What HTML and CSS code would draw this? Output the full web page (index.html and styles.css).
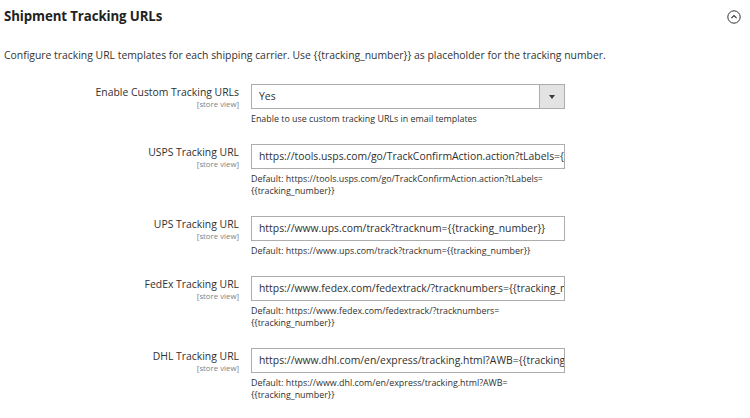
FILE: index.html
```html
<!DOCTYPE html>
<html lang="en">
<head>
<meta charset="utf-8">
<title>Shipment Tracking URLs</title>
<link rel="stylesheet" href="styles.css">
</head>
<body>
<section class="section">
  <header class="section-head">
    <h2 class="section-title">Shipment Tracking URLs</h2>
    <svg class="collapse-icon" width="14" height="14" viewBox="0 0 14 14" aria-hidden="true">
      <circle cx="7" cy="7" r="6.2" fill="none" stroke="#333" stroke-width="1"/>
      <path d="M4.4 8.2 L7 5.6 L9.6 8.2" fill="none" stroke="#333" stroke-width="1.1"/>
    </svg>
  </header>
  <p class="section-desc">Configure tracking URL templates for each shipping carrier. Use {{tracking_number}} as placeholder for the tracking number.</p>

  <div class="fields">
    <div class="field">
      <div class="label"><span class="label-text">Enable Custom Tracking URLs</span><span class="scope">[store view]</span></div>
      <div class="control">
        <div class="select">
          <span class="select-value">Yes</span>
          <span class="select-btn"><span class="arrow"></span></span>
        </div>
        <p class="note">Enable to use custom tracking URLs in email templates</p>
      </div>
    </div>

    <div class="field">
      <div class="label"><span class="label-text">USPS Tracking URL</span><span class="scope">[store view]</span></div>
      <div class="control">
        <div class="input">https://tools.usps.com/go/TrackConfirmAction.action?tLabels={{tracking_number}}</div>
        <p class="note">Default: https://tools.usps.com/go/TrackConfirmAction.action?tLabels=<br>{{tracking_number}}</p>
      </div>
    </div>

    <div class="field">
      <div class="label"><span class="label-text">UPS Tracking URL</span><span class="scope">[store view]</span></div>
      <div class="control">
        <div class="input">https://www.ups.com/track?tracknum={{tracking_number}}</div>
        <p class="note">Default: https://www.ups.com/track?tracknum={{tracking_number}}</p>
      </div>
    </div>

    <div class="field">
      <div class="label"><span class="label-text">FedEx Tracking URL</span><span class="scope">[store view]</span></div>
      <div class="control">
        <div class="input">https://www.fedex.com/fedextrack/?tracknumbers={{tracking_number}}</div>
        <p class="note">Default: https://www.fedex.com/fedextrack/?tracknumbers=<br>{{tracking_number}}</p>
      </div>
    </div>

    <div class="field">
      <div class="label"><span class="label-text">DHL Tracking URL</span><span class="scope">[store view]</span></div>
      <div class="control">
        <div class="input">https://www.dhl.com/en/express/tracking.html?AWB={{tracking_number}}</div>
        <p class="note">Default: https://www.dhl.com/en/express/tracking.html?AWB=<br>{{tracking_number}}</p>
      </div>
    </div>
  </div>
</section>
</body>
</html>
```

FILE: styles.css
```css
* { box-sizing: border-box; }

html, body {
  margin: 0;
  padding: 0;
  background: #fff;
}

body {
  font-family: "Open Sans", "Liberation Sans", sans-serif;
  color: #303030;
}

.section {
  padding: 0 0 0 4px;
  width: 750px;
}

.section-head {
  display: flex;
  align-items: center;
  justify-content: space-between;
  padding: 6px 9px 0 0;
  height: 26px;
}

.section-title {
  margin: 0;
  font-size: 13.25px;
  font-weight: 700;
  color: #222;
  letter-spacing: -0.1px;
}

.collapse-icon {
  display: block;
  margin-top: 2px;
}

.section-desc {
  margin: 22px 0 0 0;
  font-size: 10.4px;
  line-height: 14px;
  color: #333;
}

.fields {
  display: flex;
  flex-direction: column;
  gap: 19px;
  margin-top: 22px;
}

.field {
  display: grid;
  grid-template-columns: 235px 314px;
  column-gap: 12px;
}

.label {
  display: flex;
  flex-direction: column;
  align-items: flex-end;
  padding-top: 1px;
}

.label-text {
  font-size: 10.4px;
  line-height: 14px;
  color: #303030;
}

.scope {
  font-size: 7.8px;
  line-height: 10px;
  color: #808080;
}

.control {
  display: flex;
  flex-direction: column;
}

.select {
  display: flex;
  height: 25px;
  border: 1px solid #adadad;
  background: #fff;
}

.select-value {
  flex: 1;
  font-size: 10.4px;
  line-height: 23px;
  padding-left: 7px;
  color: #303030;
}

.select-btn {
  width: 25px;
  border-left: 1px solid #adadad;
  background: #e3e3e3;
  display: flex;
  align-items: center;
  justify-content: center;
}

.arrow {
  width: 0;
  height: 0;
  border-left: 3px solid transparent;
  border-right: 3px solid transparent;
  border-top: 4px solid #41362f;
}

.input {
  height: 25px;
  border: 1px solid #adadad;
  font-size: 10.4px;
  line-height: 23px;
  padding: 0 7px;
  white-space: nowrap;
  overflow: hidden;
  color: #303030;
}

.note {
  margin: 4px 0 0 0;
  font-size: 8.9px;
  line-height: 12px;
  color: #303030;
}
```
